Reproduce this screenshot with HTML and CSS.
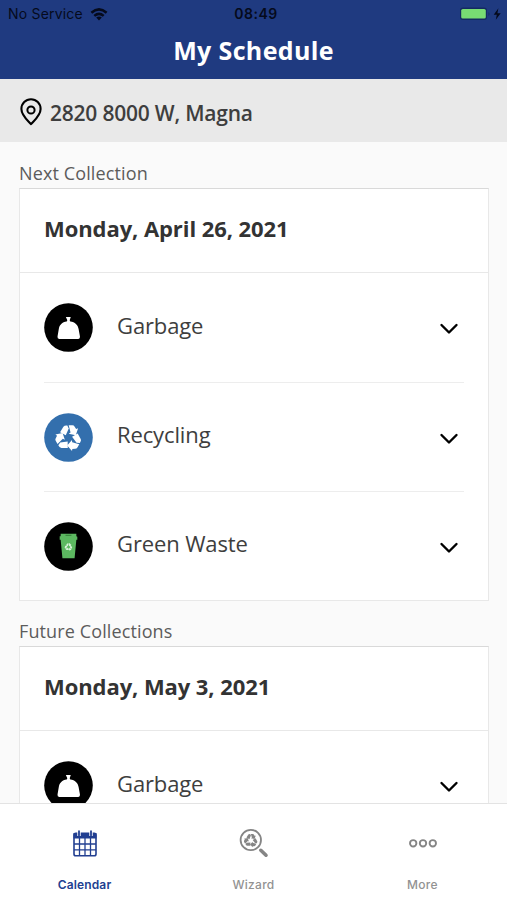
FILE: index.html
```html
<!DOCTYPE html>
<html lang="en">
<head>
<meta charset="utf-8">
<title>My Schedule</title>
<link rel="stylesheet" href="styles.css">
</head>
<body>
<svg class="defs" width="0" height="0" aria-hidden="true">
  <defs>
    <g id="arrow">
      <path d="M-8.6-5.8-5.2-11.4Q-4.2-13-1.2-12.7L.2-9.6-2.8-2.6Z"/>
      <path d="M.2-12.8H4Q5.5-12.8 6.3-11.4L7.8-9 9.8-9.8 7.4-2.7.2-4.2 2.1-5.5Z"/>
    </g>
    <g id="recycle">
      <use href="#arrow"/>
      <use href="#arrow" transform="rotate(120)"/>
      <use href="#arrow" transform="rotate(240)"/>
    </g>
    <symbol id="garbage" viewBox="0 0 50 50">
      <circle cx="25" cy="25" r="24.8" fill="#000"/>
      <path d="M22.3 14.2H27.3L26.2 17.5 26.8 18.8C31.8 19.5 34.5 22 35.3 26.5L36.7 34.3Q37 36.8 35 36.8H15.5Q13.5 36.8 13.8 34.3L15.1 26.5C15.9 22 18.4 19.5 23.2 18.8L23.8 17.5Z" fill="#fff"/>
    </symbol>
    <symbol id="chevron" viewBox="0 0 20 12">
      <path d="M2.5 2 10 9.5 17.5 2" fill="none" stroke="#000" stroke-width="2.4" stroke-linecap="round" stroke-linejoin="round"/>
    </symbol>
  </defs>
</svg>
<div class="app">
  <header class="header">
    <div class="status">
      <div class="carrier"><span>No Service</span>
        <svg width="18" height="13" viewBox="0 0 18 13"><g fill="none" stroke="#050a1c" stroke-width="2.5"><path d="M1.4 4.7Q9-1.9 16.6 4.7"/><path d="M4.3 7.9Q9 3.9 13.7 7.9"/></g><path d="M6.2 9.6Q9 7.4 11.8 9.6L9 12.5Z" fill="#050a1c"/></svg>
      </div>
      <div class="time">08:49</div>
      <div class="power">
        <svg width="44" height="14" viewBox="0 0 44 14"><rect x="0" y="0.5" width="27" height="12.5" rx="3" fill="#142a61"/><rect x="1.2" y="2" width="24.6" height="9.6" rx="1.6" fill="#78dc73"/><path d="M28.5 5Q30.5 7 28.5 9Z" fill="#142a61"/><path d="M38.4 1.2 33.7 7.8H36.8L35.8 12.8 40.7 6.2H37.4Z" fill="#050a1c"/></svg>
      </div>
    </div>
    <h1 class="title"><span>My Schedule</span></h1>
  </header>
  <div class="address">
    <svg width="22" height="28" viewBox="0 0 22 28"><path d="M11 26.2C8.5 23 1.4 17.5 1.4 10.9A9.6 9.6 0 0 1 20.6 10.9C20.6 17.5 13.5 23 11 26.2Z" fill="none" stroke="#000" stroke-width="2.1" stroke-linejoin="round"/><circle cx="11" cy="12" r="3.6" fill="none" stroke="#000" stroke-width="2"/></svg>
    <span>2820 8000 W, Magna</span>
  </div>
  <main class="content">
    <h2 class="label">Next Collection</h2>
    <section class="card">
      <h3 class="date">Monday, April 26, 2021</h3>
      <ul class="rows">
        <li class="row"><svg class="badge"><use href="#garbage"/></svg><span class="name">Garbage</span><svg class="chevron"><use href="#chevron"/></svg></li>
        <li class="row"><svg class="badge" viewBox="0 0 50 50"><circle cx="25" cy="25" r="24.8" fill="#336fad"/><use href="#recycle" fill="#fff" transform="translate(25 25.4) scale(1)"/></svg><span class="name">Recycling</span><svg class="chevron"><use href="#chevron"/></svg></li>
        <li class="row"><svg class="badge" viewBox="0 0 50 50"><circle cx="25" cy="25" r="24.8" fill="#000"/><path d="M17 12H33V14.5L34 15V18H33L31.2 37H18.8L17 18H16V14.5H17Z" fill="#5cb860"/><path d="M22 13.6H28" stroke="#347b38"/><use href="#recycle" fill="#d9f2da" transform="translate(25 25.5) scale(.29)"/></svg><span class="name">Green Waste</span><svg class="chevron"><use href="#chevron"/></svg></li>
      </ul>
    </section>
    <h2 class="label future">Future Collections</h2>
    <section class="card">
      <h3 class="date">Monday, May 3, 2021</h3>
      <ul class="rows">
        <li class="row"><svg class="badge"><use href="#garbage"/></svg><span class="name">Garbage</span><svg class="chevron"><use href="#chevron"/></svg></li>
      </ul>
    </section>
  </main>
  <nav class="tabs">
    <div class="tab active">
      <svg width="30" height="30" viewBox="0 0 30 30"><rect x="4" y="5.2" width="22" height="22.6" rx="1.8" fill="none" stroke="#223f91" stroke-width="1.6"/><path d="M3.5 5H26.5V10.5H3.5Z" fill="#223f91"/><path d="M9.5 10V27M15 10V27M20.5 10V27M4 16H26M4 21.8H26" stroke="#223f91" stroke-width="1.3"/><path d="M9 4V8M21 4V8" stroke="#fff" stroke-width="3.4"/><path d="M9 3.2V7.5M21 3.2V7.5" stroke="#223f91" stroke-width="1.8" stroke-linecap="round"/></svg>
      <span>Calendar</span>
    </div>
    <div class="tab">
      <svg width="30" height="30" viewBox="0 0 30 30"><circle cx="11.8" cy="12" r="10.2" fill="none" stroke="#858585" stroke-width="1.8"/><use href="#recycle" fill="#858585" transform="translate(11.8 12.5) scale(.51)"/><path d="M21.8 22.3 27 27.2" stroke="#858585" stroke-width="3.6" stroke-linecap="round"/></svg>
      <span>Wizard</span>
    </div>
    <div class="tab">
      <svg width="30" height="30" viewBox="0 0 30 30"><g fill="none" stroke="#858585" stroke-width="1.9"><circle cx="5.2" cy="15.3" r="3.2"/><circle cx="15" cy="15.3" r="3.2"/><circle cx="24.8" cy="15.3" r="3.2"/></g></svg>
      <span>More</span>
    </div>
  </nav>
</div>
</body>
</html>
```
FILE: styles.css
```css
* { box-sizing: border-box; margin: 0; padding: 0; }
body { background: #fafafa; font-family: "Open Sans", "Noto Sans", sans-serif; color: #3e3e3e; }
svg { display: block; flex: none; }
.defs { position: absolute; }
.app { height: 900px; display: flex; flex-direction: column; overflow: hidden; }

.header { height: 79px; flex: none; background: #1f3a80; }
.status { height: 28px; padding: 0 5px 0 8px; display: grid; grid-template-columns: 1fr auto 1fr; align-items: center; font: 14px/28px Inter, sans-serif; color: #050a1c; }
.carrier { display: flex; align-items: center; gap: 7px; letter-spacing: .2px; }
.time { font-weight: 600; letter-spacing: .5px; margin-left: 2px; }
.power { display: flex; justify-content: flex-end; margin-right: -2px; }
.title { height: 46px; text-align: center; font-size: 25px; line-height: 44px; font-weight: 700; letter-spacing: .35px; color: #fff; }

.address { height: 63px; flex: none; padding: 3px 20px 0; display: flex; align-items: center; gap: 8px; background: #e9e9e9; font-size: 21px; font-weight: 600; letter-spacing: -.22px; }
.address span { padding-top: 2px; }

.content { flex: 1; min-height: 0; overflow: hidden; padding: 17px 18px 0 19px; }
.label { height: 29px; font-size: 18px; line-height: 28px; font-weight: 400; letter-spacing: .12px; color: #5c5c5c; }
.future { margin-top: 16px; }
.card { background: #fff; border: 1px solid #e8e8e8; border-top: 1px solid #d9d9d9; }
.date { height: 84px; border-bottom: 1px solid #e8e8e8; padding: 0 24px; font-size: 22px; line-height: 78px; font-weight: 700; letter-spacing: -.08px; color: #333; }
.rows { list-style: none; padding: 0 24px; }
.row { height: 109px; display: flex; align-items: center; }
.row + .row { border-top: 1px solid #ededed; }
.badge { width: 49px; height: 49px; }
.name { flex: 1; padding: 0 0 6px 24px; font-size: 22px; line-height: 30px; letter-spacing: -.12px; }
.chevron { width: 20px; height: 12px; margin: 3px 5px 0 0; }

.tabs { height: 97px; flex: none; display: grid; grid-template-columns: repeat(3, 1fr); border-top: 1px solid #e3e3e3; background: #fff; }
.tab { display: flex; flex-direction: column; align-items: center; padding-top: 24px; gap: 18px; font: 500 12px/18px Inter, sans-serif; letter-spacing: .28px; color: #929292; }
.active { color: #223f91; font-weight: 600; letter-spacing: .15px; }
```
